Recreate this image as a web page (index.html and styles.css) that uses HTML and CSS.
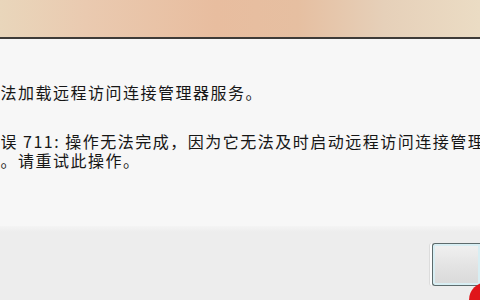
FILE: index.html
```html
<!DOCTYPE html>
<html lang="zh-CN">
<head>
    <meta charset="UTF-8">
    <meta name="viewport" content="width=device-width, initial-scale=1.0">
    <title>远程访问错误</title>
    <link rel="stylesheet" href="styles.css">
</head>
<body>
    <div class="dialog">
        <div class="title-bar"></div>

        <div class="content">
            <p class="message">无法加载远程访问连接管理器服务。</p>
            <p class="message detail">
                <span class="line">错误 711: 操作无法完成，因为它无法及时启动远程访问连接管理器服</span>
                <span class="line">务。请重试此操作。</span>
            </p>
        </div>

        <!-- Buttons -->
        <div class="footer">
            <button class="ok-btn"><span>确定</span></button>
        </div>

        <div class="mark"></div>
    </div>
</body>
</html>
```

FILE: styles.css
```css
body {
    margin: 0;
    padding: 0;
    width: 480px;
    height: 300px;
    overflow: hidden;
    font-family: "Noto Sans CJK SC", "Noto Sans", sans-serif;
    background-color: #ededed;
}

.dialog {
    position: relative;
    width: 480px;
    height: 300px;
    display: flex;
    flex-direction: column;
    overflow: hidden;
}

.title-bar {
    height: 37px;
    flex-shrink: 0;
    background: linear-gradient(90deg, #e9d6bb 0%, #eacab0 18%, #e8bd9f 45%, #e6bfa1 62%, #e6d0b9 80%, #ebdcc4 100%);
    border-bottom: 2px solid #3e3b38;
    box-shadow: 0 1px 0 #ffffff;
}

.content {
    height: 187px;
    flex-shrink: 0;
    background-color: #f7f7f7;
    padding-top: 44px;
    box-sizing: border-box;
    margin-left: -17px;
}

.message {
    margin: 0;
    font-size: 16px;
    line-height: 19px;
    color: #161616;
    white-space: nowrap;
    letter-spacing: 1.5px;
}

.detail {
    margin-top: 30px;
}

.line {
    display: block;
}

.footer {
    flex: 1;
    background: linear-gradient(180deg, #f4f4f4 0px, #ededed 6px);
    display: flex;
    justify-content: flex-end;
    padding-top: 17px;
}

.ok-btn {
    width: 48px;
    height: 43px;
    padding: 0;
    border: 1px solid #5d6b6c;
    border-right: none;
    border-radius: 3px 0 0 3px;
    background: linear-gradient(180deg, #f1f1f1 0%, #e4e4e4 50%, #d9d9d9 100%);
    box-shadow: inset 0 0 0 2px #d8eef3, -2px 0 0 #fdfdfd, -3px 0 0 #dcdcdc;
    overflow: hidden;
    cursor: pointer;
}

.ok-btn span {
    visibility: hidden;
}

.mark {
    position: absolute;
    right: -25px;
    bottom: -18px;
    width: 36px;
    height: 36px;
    border-radius: 50%;
    background-color: #e0151a;
}
```
